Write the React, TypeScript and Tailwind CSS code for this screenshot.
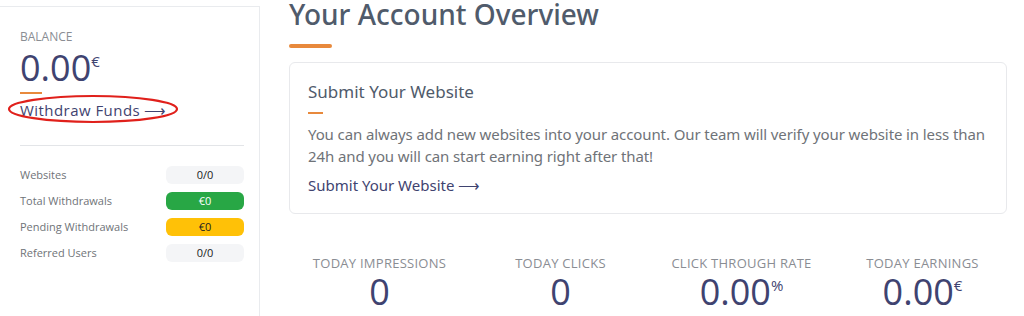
import React from "react";

const navy = "text-[#3f4370]";

const rows = [
  { label: "Websites", value: "0/0", tone: "bg-[#f4f5f7] text-[#222]" },
  { label: "Total Withdrawals", value: "€0", tone: "bg-[#28a745] text-white" },
  { label: "Pending Withdrawals", value: "€0", tone: "bg-[#ffc107] text-[#222]" },
  { label: "Referred Users", value: "0/0", tone: "bg-[#f4f5f7] text-[#222]" },
];

const stats = [
  { label: "Today Impressions", value: "0", unit: "" },
  { label: "Today Clicks", value: "0", unit: "" },
  { label: "Click Through Rate", value: "0.00", unit: "%" },
  { label: "Today Earnings", value: "0.00", unit: "€" },
];

const Sidebar = () => (
  <aside className="mt-[6px] w-[260px] shrink-0 border-t border-r border-[#e9ebee] pl-5 pr-[15px] pt-[22px] font-['Open_Sans',sans-serif]">
    <div className="text-[12px] uppercase leading-4 text-[#8a8d93]">Balance</div>
    <div className={`mt-[3px] text-[36px] leading-10 ${navy}`}>
      0.00<sup className="top-[-0.95em] text-[15px]">€</sup>
    </div>
    <div className="mt-[4px] h-[2px] w-[22px] bg-[#e8893c]" />
    <div className="relative mt-[4px]">
      <a className={`text-[15px] leading-5 tracking-[0.03em] ${navy}`}>Withdraw Funds ⟶</a>
      <svg className="absolute left-[-13px] top-[-4px]" width="172" height="30" viewBox="0 0 172 30">
        <ellipse cx="86" cy="15" rx="84" ry="13" fill="none" stroke="#e0201b" strokeWidth="2.2" />
      </svg>
    </div>
    <div className="mt-[23px] h-px bg-[#e3e5e8]" />
    <div className="mt-[20px] flex flex-col gap-[8px]">
      {rows.map((r) => (
        <div key={r.label} className="flex items-center justify-between">
          <span className="text-[11px] text-[#6f7378]">{r.label}</span>
          <span className={`flex h-[18px] w-[78px] items-center justify-center rounded-md text-[11px] font-medium ${r.tone}`}>
            {r.value}
          </span>
        </div>
      ))}
    </div>
  </aside>
);

export default function App() {
  return (
    <div className="flex h-[316px] overflow-hidden bg-white">
      <Sidebar />
      <main className="ml-[29px] w-[724px]">
        <h1 className="mt-[-4px] font-['Noto_Sans',sans-serif] text-[28px] font-medium leading-9 text-[#505b6b]">
          Your Account Overview
        </h1>
        <div className="mt-[12px] h-[4px] w-[43px] rounded-full bg-[#e8893c]" />
        <div className="mt-[14px] mr-[6px] rounded-md border border-[#e8e9ec] pl-[18px] pr-[4px] pt-[17px] pb-[16px] font-['Noto_Sans',sans-serif]">
          <h2 className="text-[17px] leading-6 text-[#505b6b]">Submit Your Website</h2>
          <div className="mt-[8px] h-[2px] w-[15px] bg-[#e8893c]" />
          <p className="mt-[9px] text-[15px] leading-[22px] tracking-[-0.1px] text-[#6f7378]">
            You can always add new websites into your account. Our team will verify your website in less than 24h and you
            will can start earning right after that!
          </p>
          <a className={`mt-[6px] block text-[15px] leading-6 ${navy}`}>Submit Your Website ⟶</a>
        </div>
        <div className="mt-[41px] grid grid-cols-4 font-['Open_Sans',sans-serif]">
          {stats.map((s) => (
            <div key={s.label} className="text-center">
              <div className="text-[13px] uppercase leading-4 tracking-[0.02em] text-[#8a8d93]">{s.label}</div>
              <div className={`mt-[3px] text-[36px] leading-9 ${navy}`}>
                {s.value}
                {s.unit && <sup className="top-[-0.95em] text-[15px]">{s.unit}</sup>}
              </div>
            </div>
          ))}
        </div>
      </main>
    </div>
  );
}
